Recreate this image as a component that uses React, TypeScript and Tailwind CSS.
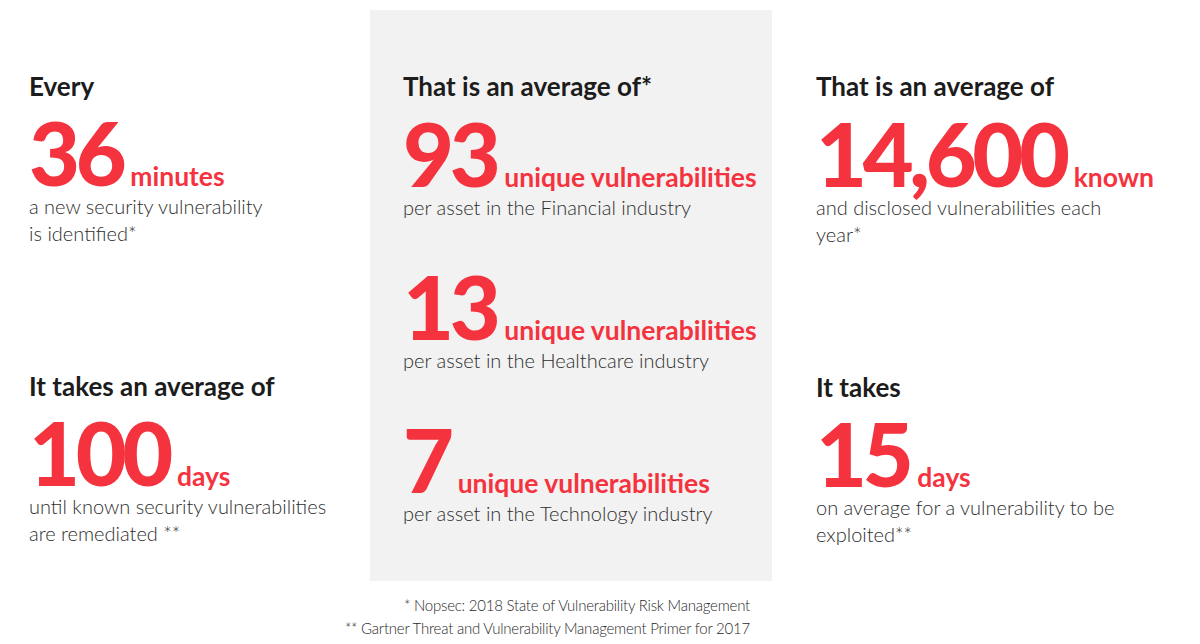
import React from "react";

const RED = "text-[#f5333f]";

function Heading({ children }: { children: React.ReactNode }) {
  return (
    <div className="text-[26px] leading-[32px] font-bold text-[#1c1c1c] whitespace-nowrap">
      {children}
    </div>
  );
}

function Stat({
  num,
  unit,
  body,
  className = "",
}: {
  num: string;
  unit: string;
  body: React.ReactNode;
  className?: string;
}) {
  return (
    <div className={className}>
      <div className="flex items-baseline whitespace-nowrap">
        <span className={`text-[88px] leading-[82px] font-black tracking-[-0.05em] ${RED}`}>{num}</span>
        <span className={`ml-[8px] text-[26.5px] leading-[26px] font-bold ${RED}`}>{unit}</span>
      </div>
      <div className="text-[20px] leading-[27px] font-light text-[#2e2e2e] whitespace-nowrap">{body}</div>
    </div>
  );
}

export default function App() {
  return (
    <div
      className="w-[1200px] h-[644px] bg-white overflow-hidden flex pl-[29px]"
      style={{ fontFamily: "Lato, 'Noto Sans', sans-serif" }}
    >
      {/* Column 1 */}
      <div className="w-[341px] pt-[70px] flex flex-col">
        <Heading>Every</Heading>
        <Stat
          className="mt-[9px]"
          num="36"
          unit="minutes"
          body={
            <>
              a new security vulnerability
              <br />
              is identified*
            </>
          }
        />
        <div className="mt-[123px]">
          <Heading>It takes an average of</Heading>
        </div>
        <Stat
          className="mt-[9px]"
          num="100"
          unit="days"
          body={
            <>
              until known security vulnerabilities
              <br />
              are remediated **
            </>
          }
        />
      </div>

      {/* Column 2 */}
      <div className="w-[402px] flex flex-col">
        <div className="mt-[10px] h-[571px] bg-[#f2f2f2] pl-[33px] pt-[60px]">
          <Heading>That is an average of*</Heading>
          <Stat
            className="mt-[10px]"
            num="93"
            unit="unique vulnerabilities"
            body="per asset in the Financial industry"
          />
          <Stat
            className="mt-[44px]"
            num="13"
            unit="unique vulnerabilities"
            body="per asset in the Healthcare industry"
          />
          <Stat
            className="mt-[44px]"
            num="7"
            unit="unique vulnerabilities"
            body="per asset in the Technology industry"
          />
        </div>
        <div className="mt-[13px] -ml-[60px] pr-[22px] text-right text-[15px] leading-[23px] font-light tracking-[-0.015em] text-[#2a2a2a] whitespace-nowrap">
          <div>* Nopsec: 2018 State of Vulnerability Risk Management</div>
          <div>** Gartner Threat and Vulnerability Management Primer for 2017</div>
        </div>
      </div>

      {/* Column 3 */}
      <div className="ml-[44px] pt-[70px] flex flex-col">
        <Heading>That is an average of</Heading>
        <Stat
          className="mt-[10px]"
          num="14,600"
          unit="known"
          body={
            <>
              and disclosed vulnerabilities each
              <br />
              year*
            </>
          }
        />
        <div className="mt-[123px]">
          <Heading>It takes</Heading>
        </div>
        <Stat
          className="mt-[9px]"
          num="15"
          unit="days"
          body={
            <>
              on average for a vulnerability to be
              <br />
              exploited**
            </>
          }
        />
      </div>
    </div>
  );
}
